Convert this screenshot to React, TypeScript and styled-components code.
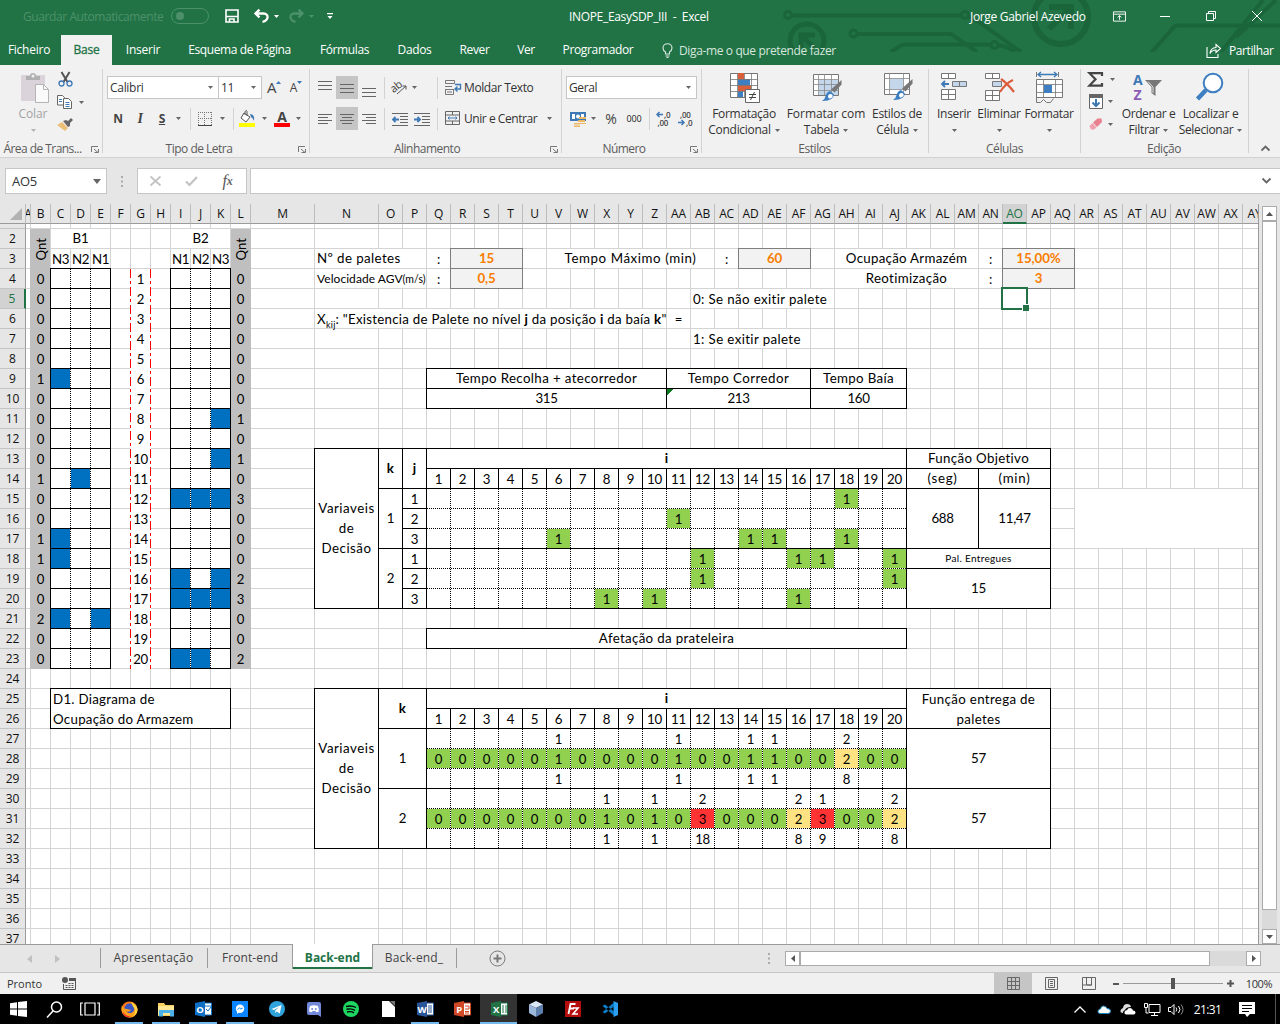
import React from "react";
import styled, { createGlobalStyle, css } from "styled-components";

const ui = `"Open Sans", "Noto Sans", sans-serif`;
const sheetFont = `Lato, "Open Sans", sans-serif`;

const Global = createGlobalStyle`
  * { box-sizing: border-box; }
  body { margin: 0; overflow: hidden; background: #e6e6e6; }
`;

const Window = styled.div`
  width: 1280px;
  height: 1024px;
  display: flex;
  flex-direction: column;
  overflow: hidden;
  font: 12px ${ui};
  letter-spacing: -0.3px;
  color: #333;
  white-space: nowrap;
  svg { display: block; flex: none; overflow: visible; }
`;

/* ---------- shared parts ---------- */

const Slot = styled.div<{ w?: number; h?: number; on?: boolean; left?: boolean }>`
  flex: none;
  width: ${(p) => (p.w ? p.w + "px" : "auto")};
  height: ${(p) => (p.h ? p.h + "px" : "100%")};
  display: flex;
  align-items: center;
  justify-content: ${(p) => (p.left ? "flex-start" : "center")};
  background: ${(p) => (p.on ? "#c5c5c5" : "transparent")};
`;

const Gap = styled.div<{ w: number }>`
  flex: none;
  width: ${(p) => p.w}px;
`;

const Label = styled.span<{ s?: number; ls?: number; c?: string; b?: boolean }>`
  font-size: ${(p) => p.s ?? 12}px;
  letter-spacing: ${(p) => (p.ls === undefined ? "inherit" : p.ls + "px")};
  color: ${(p) => p.c ?? "inherit"};
  font-weight: ${(p) => (p.b ? 700 : 400)};
`;

const Caret = ({ c = "#666", w = 5 }: { c?: string; w?: number }) => (
  <svg width={w} height={w === 5 ? 3 : 5} viewBox="0 0 5 3" preserveAspectRatio="none"><path d="M0 0h5L2.5 3z" fill={c} /></svg>
);

/* ---------- title bar ---------- */

const GreenHead = styled.header`
  position: relative;
  height: 65px;
  flex: none;
  background: #217346;
  color: #fff;
`;
const Circuit = styled.svg`
  position: absolute;
  top: 0;
  right: 0;
  && { overflow: hidden; }
`;
const TitleRow = styled.div`
  position: relative;
  height: 35px;
  display: flex;
  align-items: center;
  padding-bottom: 3px;
`;
const Toggle = styled.div`
  width: 38px;
  height: 16px;
  border: 1px solid #4c9169;
  border-radius: 8px;
  padding: 3px 4px;
  &::before {
    content: "";
    display: block;
    width: 8px;
    height: 8px;
    border-radius: 50%;
    background: #4c9169;
  }
`;
const TabRow = styled.nav`
  position: relative;
  height: 30px;
  display: flex;
`;
const RibbonTab = styled.div<{ w: number; active?: boolean; ls?: number }>`
  width: ${(p) => p.w}px;
  display: flex;
  align-items: center;
  justify-content: center;
  padding-bottom: 1px;
  letter-spacing: ${(p) => p.ls ?? -0.25}px;
  background: ${(p) => (p.active ? "#f1f1f1" : "transparent")};
  color: ${(p) => (p.active ? "#217346" : "#fff")};
  -webkit-text-stroke: ${(p) => (p.active ? "0.3px #217346" : "0")};
`;

const TitleBar = () => (
  <GreenHead>
    <Circuit width="500" height="52" viewBox="780 0 500 52" fill="none" stroke="#1b653b" strokeWidth="4">
      <circle cx="788" cy="15" r="3.500" strokeWidth="3" />
      <path d="M792 15.500H961M969 17l10 5 42 30" />
      <circle cx="965" cy="15" r="3.500" strokeWidth="3" />
      <circle cx="853.500" cy="33.500" r="3.500" strokeWidth="3" />
      <path d="M857 34h94l26 18M891 52l9-6q2-1.500 5-1.500h85M999 45.500q6 0 16 6.500" />
      <circle cx="994.500" cy="45" r="3.500" strokeWidth="3" />
      <circle cx="807" cy="41" r="17" strokeWidth="5" />
      <path d="M801 48V35h14M801 35l13 13" strokeWidth="5" />
      <circle cx="1061" cy="17" r="27" strokeWidth="6" />
      <path d="M1049 7h22v22M1071 7l-22 22" strokeWidth="6" />
      <path d="M1151 53l22-25q2-2.500 5-2.500h102M1221 52l42-52M1236 37l40-37" />
    </Circuit>
    <TitleRow>
      <Gap w={23} />
      <Slot w={141} left><Label c="#4c9169" ls={-0.41}>Guardar Automaticamente</Label></Slot>
      <Gap w={7} />
      <Toggle />
      <Slot w={46}>
        <svg width="14" height="14" viewBox="0 0 14 14" fill="none" stroke="#fff" strokeWidth="1.600"><path d="M1 1h12v12H1zM1 7.500h12M4.500 13v-3h4.500v3" /></svg>
      </Slot>
      <Slot w={13}>
        <svg width="15" height="14" viewBox="0 0 15 14" fill="none" stroke="#fff" strokeWidth="2.300"><path d="M5.500 .7L1.500 4.500l4 3.800M2 4.500h7.500q4.500 .5 4 4.200Q13 12 8.500 12.800" /></svg>
      </Slot>
      <Slot w={16}><Caret c="#fff" /></Slot>
      <Gap w={5} />
      <Slot w={15}>
        <svg width="15" height="14" viewBox="0 0 15 14" fill="none" stroke="#4c9169" strokeWidth="2.300"><path d="M9.500 .7l4 3.800-4 3.800M13 4.500H5.500Q1 5 1.500 8.700 2 12 6.500 12.800" /></svg>
      </Slot>
      <Slot w={15}><Caret c="#4c9169" /></Slot>
      <Slot w={22}>
        <svg width="6" height="7" viewBox="0 0 6 7"><path d="M0 0h6v1.300H0zM.5 3h5L3 6z" fill="#fff" /></svg>
      </Slot>
      <Gap w={228} />
      <Slot w={140} left><Label ls={-0.33}>INOPE_EasySDP_III&nbsp; -&nbsp; Excel</Label></Slot>
      <Gap w={261} />
      <Slot w={116} left><Label ls={-0.33}>Jorge Gabriel Azevedo</Label></Slot>
      <Slot w={66}>
        <svg width="13" height="11" viewBox="0 0 14 11" fill="none" stroke="#fff"><path d="M.5 .5h13v10H.5zM.5 3h13M7 9V4.500M5 6.500l2-2 2 2" /></svg>
      </Slot>
      <Slot w={26}><svg width="10" height="1"><path d="M0 .5h10" stroke="#fff" /></svg></Slot>
      <Slot w={66}>
        <svg width="10" height="10" viewBox="0 0 10 10" fill="none" stroke="#fff"><path d="M.5 2.500h7v7h-7zM2.500 2.500v-2h7v7h-2" /></svg>
      </Slot>
      <Slot w={26}>
        <svg width="10" height="10" viewBox="0 0 10 10" stroke="#fff"><path d="M0 0l10 10M10 0L0 10" /></svg>
      </Slot>
    </TitleRow>
    <TabRow>
      <RibbonTab w={58}>Ficheiro</RibbonTab>
      <Gap w={3} />
      <RibbonTab w={51} active>Base</RibbonTab>
      <RibbonTab w={62}>Inserir</RibbonTab>
      <RibbonTab w={131} ls={-0.4}>Esquema de Página</RibbonTab>
      <RibbonTab w={79} ls={-0.4}>Fórmulas</RibbonTab>
      <RibbonTab w={61} ls={-0.35}>Dados</RibbonTab>
      <RibbonTab w={59} ls={-0.35}>Rever</RibbonTab>
      <RibbonTab w={44} ls={-0.35}>Ver</RibbonTab>
      <RibbonTab w={100} ls={-0.35}>Programador</RibbonTab>
      <Gap w={13} />
      <Slot w={12}>
        <svg width="11" height="15" viewBox="0 0 11 15" fill="none" stroke="#d9eae0" strokeWidth="1.100"><path d="M3.500 11V9Q1 7.500 1 5a4.500 4.300 0 0 1 9 0q0 2.500-2.500 4v2zM3.500 13h4M4.500 14.500h2" /></svg>
      </Slot>
      <Gap w={6} />
      <Slot w={158} left><Label c="#d6e7dd" ls={-0.37}>Diga-me o que pretende fazer</Label></Slot>
      <Gap w={369} />
      <Slot w={16}>
        <svg width="16" height="15" viewBox="0 0 16 15" fill="none" stroke="#fff" strokeWidth="1.100"><path d="M1 4v10.500h11V11M4 10.500q.5-5.500 6-6V1.500l4.500 4-4.500 4V7Q6 7 4 10.500z" /></svg>
      </Slot>
      <Gap w={7} />
      <Slot left><Label ls={-0.4}>Partilhar</Label></Slot>
    </TabRow>
  </GreenHead>
);

/* ---------- ribbon ---------- */

const Ribbon = styled.div`
  height: 93px;
  flex: none;
  display: flex;
  background: #f1f1f1;
  border-bottom: 1px solid #d2d2d2;
`;
const Group = styled.section<{ w: number; pad?: number }>`
  position: relative;
  width: ${(p) => p.w}px;
  flex: none;
  display: flex;
  flex-direction: column;
  padding: 7px 0 0 ${(p) => p.pad ?? 0}px;
  &::after {
    content: "";
    position: absolute;
    right: 0;
    top: 4px;
    bottom: 4px;
    width: 1px;
    background: #d2d2d2;
  }
`;
const GroupBody = styled.div`
  height: 68px;
  display: flex;
`;
const GroupFoot = styled.div<{ pad?: number; trim?: number }>`
  height: 18px;
  display: flex;
  align-items: center;
  justify-content: center;
  color: #5c5c5c;
  letter-spacing: -0.45px;
  padding-top: 1px;
  margin-left: -${(p) => p.pad ?? 0}px;
  padding-right: ${(p) => p.trim ?? 14}px;
`;
const LauncherBox = styled.svg`
  position: absolute;
  right: 4px;
  bottom: 4px;
`;
const Launcher = () => (
  <LauncherBox width="8" height="7" viewBox="0 0 8 7" fill="none" stroke="#777"><path d="M.5 6V.5H7M3 3l4 3.500M7.500 3v3.500H3.500" /></LauncherBox>
);
const Stack = styled.div`
  display: flex;
  flex-direction: column;
  gap: 8px;
  padding-top: 4px;
`;
const Line = styled.div`
  height: 23px;
  display: flex;
  align-items: center;
`;
const Divider = styled.div<{ w: number }>`
  flex: none;
  width: ${(p) => p.w}px;
  height: 22px;
  background: linear-gradient(#d2d2d2, #d2d2d2) center / 1px 100% no-repeat;
`;
const Combo = styled.div<{ w: number }>`
  width: ${(p) => p.w}px;
  height: 23px;
  flex: none;
  display: flex;
  align-items: center;
  justify-content: space-between;
  padding: 0 5px 0 2px;
  background: #fff;
  border: 1px solid #c6c6c6;
  & + & { margin-left: -1px; }
`;
const Big = styled.div<{ w: number; dim?: boolean }>`
  flex: none;
  width: ${(p) => p.w}px;
  display: flex;
  flex-direction: column;
  align-items: center;
  line-height: 16px;
  color: ${(p) => (p.dim ? "#a3a3a3" : "#333")};
  & > svg { height: 32px; margin-bottom: 2px; }
`;
const BigLine = styled.div`
  height: 16px;
  display: flex;
  align-items: center;
  gap: 4px;
`;
const Glyph = styled.span<{ s?: number; c?: string; serif?: boolean; b?: boolean; i?: boolean; u?: boolean }>`
  font-size: ${(p) => p.s ?? 13}px;
  line-height: 1;
  font-family: ${(p) => (p.serif ? `"Liberation Serif", serif` : ui)};
  font-weight: ${(p) => (p.b ? 700 : 400)};
  font-style: ${(p) => (p.i ? "italic" : "normal")};
  text-decoration: ${(p) => (p.u ? "underline" : "none")};
  color: ${(p) => p.c ?? "#444"};
`;
const Swatched = styled.div<{ c: string }>`
  width: 16px;
  height: 17px;
  display: flex;
  justify-content: center;
  border-bottom: 4px solid ${(p) => p.c};
`;

const Lines = ({ mode, y = 0 }: { mode: "l" | "c" | "r" | "v"; y?: number }) => {
  const widths = mode === "v" ? [14, 14, 14] : [14, 10, 14, 10];
  return (
    <svg width="14" height="20" viewBox="0 0 14 20" stroke="#666">
      {widths.map((w, n) => {
        const x = mode === "l" ? 0 : mode === "r" ? 14 - w : (14 - w) / 2;
        const yy = (mode === "v" ? 6 + y : 5) + n * (mode === "v" ? 4 : 3);
        return <path key={n} d={`M${x} ${yy + 0.5}h${w}`} />;
      })}
    </svg>
  );
};
const IndentIcon = ({ right }: { right?: boolean }) => (
  <svg width="16" height="14" viewBox="0 0 16 14" fill="none" stroke="#666">
    <path d="M0 1.500h16M8 4.500h8M8 7.500h8M8 10.500h8M0 13.500h16" />
    <path d={right ? "M0 7.500h6M3.500 5L6 7.500 3.500 10" : "M1 7.500h6M3.500 5L1 7.500 3.500 10"} stroke="#3e78b5" strokeWidth="1.800" />
  </svg>
);
const Brush = () => (
  <>
    <path d="M30.500 7v4.500l-7 8-3.500-3z" fill="#777" />
    <path d="M19 18l4 3.500q-1 7-12 6.500 3-1.500 3.500-5 1-4 4.500-5z" fill="#3e7fc1" />
    <path d="M17 24q0-3 2.500-3t2 2.500q-1 2.500-3.500 2z" fill="#fff" />
  </>
);

const RibbonBar = () => (
  <Ribbon>
    <Group w={103}>
      <GroupBody>
        <Gap w={12} />
        <Big w={42} dim>
          <svg width="30" height="32" viewBox="-2 0 30 32">
            <path d="M1 3h24v26H1z" fill="#dad4da" />
            <path d="M6 4h4q0-3 3-3t3 3h4v4H6z" fill="#b0b0b0" /><circle cx="13" cy="4" r="1.500" fill="#f1f1f1" />
            <path d="M15.500 12.500h8l5 5v13h-13z" fill="#fafafa" stroke="#b5b5b5" /><path d="M23.500 12.500v5h5" fill="none" stroke="#b5b5b5" />
          </svg>
          <BigLine><Label ls={-0.1}>Colar</Label></BigLine>
          <BigLine><Caret c="#b5b5b5" /></BigLine>
        </Big>
        <Gap w={2} />
        <div>
          <Slot w={18} h={15}>
            <svg width="15" height="15" viewBox="0 0 15 15" fill="none"><path d="M3.500 0l6 10M11.500 0l-6 10" stroke="#555" strokeWidth="2" /><circle cx="3.500" cy="11.500" r="2.500" stroke="#3e78b5" strokeWidth="1.300" /><circle cx="11.500" cy="11.500" r="2.500" stroke="#3e78b5" strokeWidth="1.300" /></svg>
          </Slot>
          <Slot w={30} h={30} left>
            <svg width="16" height="14" viewBox="0 0 16 14" fill="#fff" stroke="#666"><path d="M1.500 .5h5l2 2v7.500h-7z" /><path d="M7.500 3.500h5l3 3v7h-8z" /><path d="M3 4.500h3M3 6.500h3M9.500 7.500h4M9.500 9.500h4M9.500 11.500h4" stroke="#3e78b5" /></svg>
            <Gap w={7} /><Caret />
          </Slot>
          <Slot w={18} h={14}>
            <svg width="16" height="13" viewBox="0 0 16 13"><path d="M0 7l5-3 6 6-3 3z" fill="#ecc077" /><path d="M6 3l3-1 2 1 3-3 2 2-3 3 0 3-2 1z" fill="#666" /></svg>
          </Slot>
        </div>
      </GroupBody>
      <GroupFoot trim={18}><Label ls={-0.55}>Área de Trans...</Label></GroupFoot>
      <Launcher />
    </Group>

    <Group w={207} pad={4}>
      <GroupBody>
        <Stack>
          <Line>
            <Combo w={112}><Label>Calibri</Label><Caret /></Combo>
            <Combo w={44}><Label>11</Label><Caret /></Combo>
            <Slot w={24}><Glyph s={15}>A</Glyph><svg width="5" height="14"><path d="M0 3h5L2.500 0z" fill="#3e78b5" /></svg></Slot>
            <Slot w={20}><Glyph s={12}>A</Glyph><svg width="5" height="14"><path d="M0 0h5L2.500 3z" fill="#3e78b5" /></svg></Slot>
          </Line>
          <Line>
            <Slot w={22}><Glyph b s={12}>N</Glyph></Slot>
            <Slot w={22}><Glyph b i serif s={14}>I</Glyph></Slot>
            <Slot w={22}><Glyph b u s={12}>S</Glyph></Slot>
            <Slot w={11}><Caret /></Slot>
            <Divider w={12} />
            <Slot w={18}><svg width="14" height="14" viewBox="0 0 14 14" fill="none" stroke="#777"><path d="M0 .5h14M0 6.500h14M.5 0v14M6.500 0v14M13.500 0v14" strokeDasharray="1 1" /><path d="M0 13.500h14" stroke="#444" /></svg></Slot>
            <Slot w={16}><Caret /></Slot>
            <Divider w={6} />
            <Gap w={3} />
            <Slot w={16}>
              <Swatched c="#ffff00"><svg width="16" height="13" viewBox="0 0 16 13" fill="#fff" stroke="#555"><path d="M5 3l6 4-4 5-5-4zM6 5V1.500q2-2 2 0V6" /><path d="M11 4q5 0 4 7-1-3-3-4z" fill="#3e78b5" stroke="none" /></svg></Swatched>
            </Slot>
            <Slot w={18}><Caret /></Slot>
            <Gap w={1} />
            <Slot w={16}><Swatched c="#ff0000"><Glyph b s={14}>A</Glyph></Swatched></Slot>
            <Slot w={16}><Caret /></Slot>
          </Line>
        </Stack>
      </GroupBody>
      <GroupFoot pad={4} trim={15}><Label ls={-0.5}>Tipo de Letra</Label></GroupFoot>
      <Launcher />
    </Group>

    <Group w={252} pad={4}>
      <GroupBody>
        <Stack>
          <Line>
            <Slot w={22}><Lines mode="v" y={-3} /></Slot>
            <Slot w={22} on><Lines mode="v" /></Slot>
            <Slot w={22}><Lines mode="v" y={4} /></Slot>
            <Divider w={8} />
            <Slot w={22}>
              <svg width="17" height="15" viewBox="0 0 17 15"><text x="0" y="10" fontSize="11" fill="#444" transform="rotate(-38 6 8)" fontFamily="Open Sans">ab</text><path d="M6 14l9-8M11.500 6H15v3.500" stroke="#555" fill="none" /></svg>
            </Slot>
            <Slot w={8}><Caret /></Slot>
            <Gap w={16} />
            <Divider w={6} />
            <Gap w={5} />
            <Slot w={19} left>
              <svg width="17" height="16" viewBox="0 0 17 16" fill="none" stroke="#777"><path d="M.5 .5h9v3h-9zM0 6.500h7M.5 9.500h8M.5 9v5.500h8V9M2 12h5" /><path d="M10 4.500h5.500v4.500H10M12.500 6.500L10 9l2.500 2.500" stroke="#3e78b5" strokeWidth="1.400" /></svg>
            </Slot>
            <Label ls={-0.4}>Moldar Texto</Label>
          </Line>
          <Line>
            <Slot w={22}><Lines mode="l" /></Slot>
            <Slot w={22} on><Lines mode="c" /></Slot>
            <Slot w={22}><Lines mode="r" /></Slot>
            <Divider w={8} />
            <Slot w={24}><IndentIcon /></Slot>
            <Slot w={20}><IndentIcon right /></Slot>
            <Gap w={2} />
            <Divider w={6} />
            <Gap w={5} />
            <Slot w={19} left>
              <svg width="16" height="15" viewBox="0 0 16 15" fill="none" stroke="#666"><path d="M.5 .5h14v13H.5zM.5 4h14M.5 10h14M7.500 .5V4M7.500 10v4" /><path d="M3 7h9M4.500 5.500L3 7l1.500 1.500M10.500 5.500L12 7l-1.500 1.500" stroke="#3e78b5" /></svg>
            </Slot>
            <Slot w={76} left><Label ls={-0.45}>Unir e Centrar</Label></Slot>
            <Slot w={18}><Caret /></Slot>
          </Line>
        </Stack>
      </GroupBody>
      <GroupFoot pad={4} trim={18}><Label ls={-0.5}>Alinhamento</Label></GroupFoot>
      <Launcher />
    </Group>

    <Group w={140} pad={4}>
      <GroupBody>
        <Stack>
          <Line><Combo w={131}><Label ls={-0.4}>Geral</Label><Caret /></Combo></Line>
          <Line>
            <Gap w={1} />
            <Slot w={22}>
              <svg width="17" height="16" viewBox="0 0 17 16"><path d="M0 1h16v9H0z" fill="#3e78b5" /><path d="M2 3h3v5H2zM11 3h3v4h-3z" fill="#fff" /><circle cx="8" cy="5.500" r="2" fill="#fff" /><path d="M9 6h7v2H9zM8 9h7v2H8zM9 12h7v1H9zM4 12h6v1.500H4zM4 14.500h6V16H4z" fill="#ecb863" /></svg>
            </Slot>
            <Slot w={9}><Caret /></Slot>
            <Slot w={26}><Glyph s={14}>%</Glyph></Slot>
            <Slot w={20}><Label s={9} ls={-0.2} c="#222">000</Label></Slot>
            <Divider w={10} />
            <Slot w={19}>
              <svg width="15" height="15" viewBox="0 0 15 15" fill="#444" fontSize="8" fontFamily="Open Sans" fontWeight="600"><path d="M7 3.500H1M3.500 1L1 3.500 3.500 6" stroke="#3e78b5" strokeWidth="1.500" fill="none" /><text x="8" y="6.500">,0</text><text x="1.500" y="14.500">,00</text></svg>
            </Slot>
            <Slot w={24}>
              <svg width="15" height="15" viewBox="0 0 15 15" fill="#444" fontSize="8" fontFamily="Open Sans" fontWeight="600"><path d="M0 11.500h6M3.500 9L6 11.500 3.500 14" stroke="#3e78b5" strokeWidth="1.500" fill="none" /><text x="2" y="6.500">,00</text><text x="8" y="14.500">,0</text></svg>
            </Slot>
          </Line>
        </Stack>
      </GroupBody>
      <GroupFoot pad={4} trim={16}><Label ls={-0.6}>Número</Label></GroupFoot>
      <Launcher />
    </Group>

    <Group w={227}>
      <GroupBody>
        <Big w={84}>
          <svg width="30" height="32" viewBox="-1 0 30 32"><path d="M.5 1.500h27v24H.5z" fill="#fff" stroke="#777" /><path d="M8 1v6h6V1zM8 13h13v6H8z" fill="#d95f3b" /><path d="M8 7h12v6H8zM8 19h5v6H8z" fill="#3e7fc1" /><path d="M0 7.500h28M0 13.500h28M0 19.500h28M7.500 1v25M14.500 1v6M14.500 19v6M21.500 1v24" stroke="#777" strokeWidth=".8" /><path d="M15.500 17.500h14v13h-14z" fill="#fff" stroke="#666" /><path d="M19 22.500h7M19 25.500h7M24.500 20l-4 8" stroke="#444" /></svg>
          <BigLine>Formatação</BigLine>
          <BigLine><Label>Condicional</Label><Caret /></BigLine>
        </Big>
        <Big w={80}>
          <svg width="32" height="32" viewBox="-1 -1 32 32"><path d="M2.500 1.500h25v21h-25z" fill="#fff" stroke="#777" /><path d="M8 7h19v15H8z" fill="#c3d6ea" /><path d="M2 6.500h26M2 11.500h26M2 17.500h26M7.500 1v21M13.500 1v21M20.500 1v21" stroke="#888" strokeWidth=".8" /><Brush /></svg>
          <BigLine><Label ls={-0.05}>Formatar com</Label></BigLine>
          <BigLine>Tabela<Caret /></BigLine>
        </Big>
        <Big w={62}>
          <svg width="32" height="32" viewBox="-1 0 32 32"><path d="M2.500 1.500h25v21h-25z" fill="#fff" stroke="#777" /><path d="M2 6.500h26M2 17.500h26M7.500 1v21M21.500 1v21" stroke="#888" strokeWidth=".8" /><path d="M8 7h13v10H8z" fill="#c3d6ea" /><Brush /></svg>
          <BigLine><Label>Estilos de</Label></BigLine>
          <BigLine>Célula<Caret /></BigLine>
        </Big>
      </GroupBody>
      <GroupFoot><Gap w={12} />Estilos</GroupFoot>
    </Group>

    <Group w={152}>
      <GroupBody>
        <Gap w={3} />
        <Big w={44}>
          <svg width="28" height="32" viewBox="0 0 28 32" fill="#fff" stroke="#777"><path d="M1.500 1.500h14v5h-14zM8.500 1.500v5M1.500 17.500h14v10h-14zM8.500 17.500v10M1.500 22.500h14" /><path d="M12.500 9.500h14v5h-14zM19.500 9.500v5" fill="#c3d6ea" /><path d="M9 12H2M5 9l-3 3 3 3" fill="none" stroke="#3e78b5" strokeWidth="1.800" /></svg>
          <BigLine><Label>Inserir</Label></BigLine><BigLine><Caret /></BigLine>
        </Big>
        <Big w={46}>
          <svg width="30" height="32" viewBox="-1 0 30 32" fill="#fff" stroke="#777"><path d="M.5 1.500h14v5h-14zM7.500 1.500v5M.5 18.500h14v10h-14zM7.500 18.500v10M.5 23.500h14" /><path d="M7.500 9.500h9v5h-9z" fill="#c3d6ea" /><path d="M16 7q6 4 13 13M28 8q-7 3-13 12" fill="none" stroke="#dc5b3c" strokeWidth="2.200" /></svg>
          <BigLine><Label>Eliminar</Label></BigLine><BigLine><Caret /></BigLine>
        </Big>
        <Big w={54}>
          <svg width="30" height="32" viewBox="-1 0 30 32" fill="#fff" stroke="#777"><path d="M1.500 7.500h26v18h-26z" /><path d="M1 12.500h27M1 20.500h27M8.500 7v19M20.500 7v19" strokeWidth=".8" /><path d="M9 13h8v8H9z" fill="#3e7fc1" stroke="none" /><path d="M1.500 25v5.500l4 0 3-3 3 3h4l3-4M1.500 0v5M23.500 0v5" fill="none" /><path d="M3 2.500h19M6 0L3 2.500 6 5M19 0l3 2.500L19 5" fill="none" stroke="#3e78b5" strokeWidth="1.300" /></svg>
          <BigLine><Label ls={-0.35}>Formatar</Label></BigLine><BigLine><Caret /></BigLine>
        </Big>
      </GroupBody>
      <GroupFoot><Gap w={13} />Células</GroupFoot>
    </Group>

    <Group w={168}>
      <GroupBody>
        <Gap w={6} />
        <div>
          <Slot w={32} h={14} left>
            <svg width="17" height="15" viewBox="0 0 17 15" fill="none" stroke="#444" strokeWidth="2.200"><path d="M15 4V1.200H2.500L8.500 7.300 2.500 13.600H15V11" /></svg>
            <Gap w={6} /><Caret />
          </Slot>
          <Slot w={32} h={31} left>
            <Gap w={2} /><svg width="14" height="15" viewBox="0 0 14 15" fill="#fff" stroke="#666"><path d="M.5 .5h13v14H.5z" /><path d="M0 0h14v4H0z" fill="#666" stroke="none" /><path d="M7 5v7M3.500 8.500L7 12l3.500-3.500" fill="none" stroke="#3e78b5" strokeWidth="2" /></svg>
            <Gap w={5} /><Caret />
          </Slot>
          <Slot w={32} h={14} left>
            <Gap w={2} /><svg width="14" height="12" viewBox="0 0 14 12"><path d="M8.500 .5h4l.5 3.500-5 5-4-4.500z" fill="#e8808f" /><path d="M3.500 5l4 4.500-2.500 2H2L.5 8z" fill="#f0a0ac" /></svg>
            <Gap w={5} /><Caret />
          </Slot>
        </div>
        <Gap w={1} />
        <Big w={57}>
          <svg width="32" height="32" viewBox="1 0 32 32" fontFamily="Open Sans" fontWeight="700" fontSize="14"><text x="1" y="13">
            <tspan fill="#3e78b5">A</tspan><tspan x="1.500" y="27.500" fill="#8a5bb5">Z</tspan></text><path d="M13 8h17l-6.500 7v9l-4 -3v-6z" fill="#777" /><path d="M16 9.500l5 5.500v6" stroke="#ddd" fill="none" /></svg>
          <BigLine><Label ls={-0.4}>Ordenar e</Label></BigLine>
          <BigLine>Filtrar<Caret /></BigLine>
        </Big>
        <Big w={67}>
          <svg width="30" height="32" viewBox="1 0 30 32" fill="#fff" stroke="#3e7fc1"><path d="M11 18l-8.500 9" strokeWidth="4.500" /><circle cx="18" cy="11" r="9.300" strokeWidth="2" /></svg>
          <BigLine><Label ls={-0.3}>Localizar e</Label></BigLine>
          <BigLine><Label ls={-0.35}>Selecionar</Label><Caret /></BigLine>
        </Big>
      </GroupBody>
      <GroupFoot><Gap w={12} />Edição</GroupFoot>
    </Group>
    <Gap w={12} />
    <Slot w={9}><svg width="9" height="78" viewBox="0 -68 9 78"><path d="M.5 5.500l4-4 4 4" transform="translate(0 5)" fill="none" stroke="#666" strokeWidth="1.800" /></svg></Slot>
  </Ribbon>
);

/* ---------- formula bar ---------- */

const FormulaRow = styled.div`
  height: 46px;
  flex: none;
  display: flex;
  padding: 10px 0 10px 5px;
  background: #e6e6e6;
`;
const WhiteBox = styled.div<{ w?: number; justify?: string }>`
  ${(p) => (p.w ? `width: ${p.w}px; flex: none;` : "flex: 1; border-right: 0 !important;")}
  display: flex;
  align-items: center;
  justify-content: ${(p) => p.justify ?? "space-between"};
  padding: 0 5px 0 6px;
  background: #fff;
  border: 1px solid #c6c6c6;
`;
const FormulaBar = () => (
  <FormulaRow>
    <WhiteBox w={102}><Label s={13} ls={-0.3}>AO5</Label><Caret w={8} /></WhiteBox>
    <Slot w={30}><svg width="2" height="11" fill="#aaa"><path d="M0 0h2v2H0zM0 4.500h2v2H0zM0 9h2v2H0z" /></svg></Slot>
    <WhiteBox w={110} justify="center">
      <Slot w={34}><svg width="11" height="10" viewBox="0 0 11 10" stroke="#c3c3c3" strokeWidth="1.800"><path d="M.5 .5l10 9M10.500 .5l-10 9" /></svg></Slot>
      <Slot w={38}><svg width="13" height="10" viewBox="0 0 13 10" fill="none" stroke="#c3c3c3" strokeWidth="2.200"><path d="M1 5.500L4.500 9 12 1" /></svg></Slot>
      <Slot w={34}><Glyph serif i s={16} c="#555">f</Glyph><Glyph serif i b s={12} c="#666">x</Glyph></Slot>
      <Gap w={2} />
    </WhiteBox>
    <Gap w={3} />
    <WhiteBox justify="flex-end"><svg width="9" height="6" viewBox="0 0 9 6"><path d="M.5 .5l4 4 4-4" fill="none" stroke="#666" strokeWidth="1.800" /></svg><Gap w={4} /></WhiteBox>
  </FormulaRow>
);

/* ---------- worksheet ---------- */

const letters = "ABCDEFGHIJKLMNOPQRSTUVWXYZ";
const cols: string[] = [...letters.split(""), ...letters.slice(0, 25).split("").map((l) => "A" + l)];
const colWidth = (i: number) => (i === 0 ? 5 : i < 12 ? 20 : i < 14 ? 64 : 24);
const lastRow = 37;

const SheetArea = styled.div`
  height: 740px;
  flex: none;
  display: flex;
  background: #e6e6e6;
`;
const Grid = styled.div`
  width: 1259px;
  height: 741px;
  flex: none;
  display: grid;
  grid-template-columns: 26px ${cols.map((_, i) => colWidth(i) + "px").join(" ")};
  grid-template-rows: 20px 5px repeat(${lastRow - 1}, 20px);
  overflow: hidden;
  background: #fff;
  border-right: 1px solid #9b9b9b;
  color: #000;
  font: 13.2px ${sheetFont};
`;
const colLine = (c: string) => cols.indexOf(c) + 2;
const area = (c1: string, r1: number, c2 = c1, r2 = r1) =>
  `${r1 + 1} / ${colLine(c1)} / ${r2 + 2} / ${colLine(c2) + 1}`;

const Placed = styled.div.attrs<{ $at: string }>((p) => ({ style: { gridArea: p.$at } }))<{ $at: string }>``;

const ColLine = styled(Placed)`border-right: 1px solid #d4d4d4;`;
const RowLine = styled(Placed)`border-bottom: 1px solid #d4d4d4;`;
const ColHead = styled(Placed)<{ $on?: boolean }>`
  display: flex;
  align-items: center;
  justify-content: center;
  overflow: hidden;
  font: 12px ${ui};
  letter-spacing: -0.2px;
  color: ${(p) => (p.$on ? "#217346" : "#111")};
  background: ${(p) => (p.$on ? "#d2d2d2" : "#e6e6e6")};
  border-right: 1px solid #bdbdbd;
  border-bottom: ${(p) => (p.$on ? "2px solid #217346" : "1px solid #9b9b9b")};
`;
const RowHead = styled(Placed)<{ $on?: boolean }>`
  display: flex;
  align-items: center;
  justify-content: center;
  overflow: hidden;
  font: 12px ${ui};
  letter-spacing: 0;
  color: ${(p) => (p.$on ? "#217346" : "#111")};
  background: ${(p) => (p.$on ? "#d2d2d2" : "#e6e6e6")};
  border-bottom: 1px solid #c4c4c4;
  border-right: ${(p) => (p.$on ? "2px solid #217346" : "1px solid #9b9b9b")};
`;
const Corner = styled(Placed)`
  display: flex;
  justify-content: flex-end;
  align-items: flex-end;
  padding: 0 3px 3px;
  background: #e6e6e6;
  border-right: 1px solid #bdbdbd;
  border-bottom: 1px solid #9b9b9b;
`;

const isNumber = (v: unknown) => typeof v === "number" || (typeof v === "string" && /^[\d,%]+$/.test(v));

const Cell = styled(Placed)<{
  $line?: string; $bg?: string; $b?: boolean; $left?: boolean; $low?: boolean; $s?: number; $ls?: number;
}>`
  margin: -1px 0 0 -1px;
  display: flex;
  align-items: center;
  justify-content: ${(p) => (p.$left ? "flex-start" : "center")};
  text-align: ${(p) => (p.$left ? "left" : "center")};
  padding-left: ${(p) => (p.$left ? 2 : 0)}px;
  padding-bottom: ${(p) => (p.$low ? 0 : 2)}px;
  line-height: 20px;
  background: ${(p) => p.$bg ?? "#fff"};
  border: 1px solid ${(p) => p.$line ?? "#d4d4d4"};
  font-weight: ${(p) => (p.$b ? 700 : 400)};
  font-size: ${(p) => p.$s ?? 13.3}px;
  letter-spacing: ${(p) => p.$ls ?? (isNumber(p.children) ? -0.3 : 0.33)}px;
  color: #000;
`;
const Input = styled(Cell)`
  background: #f2f2f2;
  border-color: #7f7f7f;
  color: #fa7d00;
  font-weight: 700;
  letter-spacing: -0.1px;
`;

const dotsDown = "repeating-linear-gradient(to bottom, #000 0 1px, #fff 1px 2px) right top / 1px 100% no-repeat";
const dotsAcross = "repeating-linear-gradient(to right, #000 0 1px, #fff 1px 2px) left bottom / 100% 1px no-repeat";
const Dotted = styled(Placed)<{ $bg: string; $solidRight?: boolean; $solidBottom?: boolean }>`
  display: flex;
  align-items: center;
  justify-content: center;
  line-height: 20px;
  letter-spacing: -0.3px;
  padding-right: 1px;
  ${(p) => {
    const right = p.$solidRight ? "linear-gradient(#000, #000) right top / 1px 100% no-repeat" : dotsDown;
    const bottom = p.$solidBottom ? "linear-gradient(#000, #000) left bottom / 100% 1px no-repeat" : dotsAcross;
    return css`background: ${bottom}, ${right}, ${p.$bg};`;
  }}
`;
const Aisle = styled(Placed)`
  margin-left: -1px;
  --dash: repeating-linear-gradient(to bottom, #f00 0 9px, #fff 9px 12px, #f00 12px 15px, #fff 15px 18px);
  background: var(--dash) left top / 1px 100% no-repeat, var(--dash) right top / 1px 100% no-repeat, #fff;
`;
const Plain = styled(Placed)`
  display: flex;
  align-items: center;
  justify-content: center;
  line-height: 20px;
  letter-spacing: -0.3px;
  padding-right: 1px;
`;
const GrayStrip = styled(Placed)`
  background: #bfbfbf;
  margin-left: -1px;
`;
const Turned = styled.span`
  writing-mode: vertical-rl;
  transform: rotate(180deg);
  letter-spacing: 0;
`;
const Blank = styled(Placed)`background: #fff; margin-bottom: 1px;`;
const Selection = styled(Placed)`
  position: relative;
  margin: -2px -1px -1px -2px;
  border: 2px solid #217346;
  &::after {
    content: "";
    position: absolute;
    right: -3px;
    bottom: -3px;
    width: 6px;
    height: 6px;
    background: #217346;
    border: solid #fff;
    border-width: 1px 0 0 1px;
  }
`;
const ErrorMark = styled(Placed)`
  width: 6px;
  height: 6px;
  background: linear-gradient(135deg, #0a7a1e 50%, transparent 50%);
`;
const Sub = styled.span`
  font-size: 9px;
  line-height: 1;
  position: relative;
  top: 4px;
`;

const K = "#000";
const BLUE = "#0070c0";
const GREEN = "#92d050";
const YELLOW = "#ffe383";
const RED = "#ff3333";

const leftBay: Record<number, string> = { 9: "C", 14: "D", 17: "C", 18: "C", 21: "CE" };
const rightBay: Record<number, string> = { 11: "K", 13: "K", 15: "IJK", 19: "IK", 20: "IJK", 23: "IJ" };
const slots = Array.from({ length: 20 }, (_, i) => i);
const slotCol = (i: number) => cols[16 + i];

const decision: Record<number, number[]> = {
  15: [18], 16: [11], 17: [6, 14, 15, 18], 18: [12, 16, 17, 20], 19: [12, 20], 20: [8, 10, 16],
};
const delivery: Record<number, Record<number, number>> = {
  27: { 6: 1, 11: 1, 14: 1, 15: 1, 18: 2 },
  28: { 6: 1, 11: 1, 14: 1, 15: 1, 18: 2 },
  29: { 6: 1, 11: 1, 14: 1, 15: 1, 18: 8 },
  30: { 8: 1, 10: 1, 12: 2, 16: 2, 17: 1, 20: 2 },
  31: { 8: 1, 10: 1, 12: 3, 16: 2, 17: 3, 20: 2 },
  32: { 8: 1, 10: 1, 12: 18, 16: 8, 17: 9, 20: 8 },
};

const Bay = ({ letters: ls, filled }: { letters: string; filled: Record<number, string> }) => (
  <>
    <Cell $at={area(ls[0], 4, ls[2], 23)} $line={K} />
    {slots.map((i) =>
      ls.split("").map((l, n) => (
        <Dotted key={l + i} $at={area(l, i + 4)} $solidBottom $solidRight={n === 2} $bg={filled[i + 4]?.includes(l) ? BLUE : "#fff"} />
      ))
    )}
  </>
);

const Numbers = ({ row }: { row: number }) => (
  <>{slots.map((i) => <Cell key={i} $at={area(slotCol(i), row)} $line={K} $low>{i + 1}</Cell>)}</>
);

const Worksheet = () => (
  <Grid>
    {cols.map((c) => <ColLine key={c} $at={area(c, 1, c, lastRow)} />)}
    {Array.from({ length: lastRow }, (_, r) => <RowLine key={r} $at={area("A", r + 1, "AY", r + 1)} />)}

    <Corner $at="1 / 1 / 2 / 2"><svg width="12" height="12"><path d="M12 0v12H0z" fill="#b2b2b2" /></svg></Corner>
    {cols.map((c, i) => <ColHead key={c} $at={`1 / ${i + 2} / 2 / ${i + 3}`} $on={c === "AO"}>{c}</ColHead>)}
    {Array.from({ length: lastRow }, (_, r) => (
      <RowHead key={r} $at={`${r + 2} / 1 / ${r + 3} / 2`} $on={r === 4}>{r ? r + 1 : ""}</RowHead>
    ))}

    <GrayStrip $at={area("B", 2, "B", 23)} />
    <GrayStrip $at={area("L", 2, "L", 23)} />
    <Plain $at={area("B", 2, "B", 3)}><Turned>Qnt</Turned></Plain>
    <Plain $at={area("L", 2, "L", 3)}><Turned>Qnt</Turned></Plain>
    <Cell $at={area("C", 2, "E", 2)} $ls={-0.2}>B1</Cell>
    <Cell $at={area("I", 2, "K", 2)} $ls={-0.2}>B2</Cell>
    {[["C", "N3"], ["D", "N2"], ["E", "N1"], ["I", "N1"], ["J", "N2"], ["K", "N3"]].map(([c, t]) => (
      <Cell key={c} $at={area(c, 3)} $ls={-0.4} $low>{t}</Cell>
    ))}
    <Aisle $at={area("G", 4, "G", 23)} />
    <Bay letters="CDE" filled={leftBay} />
    <Bay letters="IJK" filled={rightBay} />
    {slots.map((i) => (
      <React.Fragment key={i}>
        <Plain $at={area("B", i + 4)}>{(leftBay[i + 4] ?? "").length}</Plain>
        <Plain $at={area("G", i + 4)}>{i + 1}</Plain>
        <Plain $at={area("L", i + 4)}>{(rightBay[i + 4] ?? "").length}</Plain>
      </React.Fragment>
    ))}
    <Cell $at={area("C", 25, "K", 26)} $line={K} $left $low $ls={0.27}>D1. Diagrama de<br />Ocupação do Armazem</Cell>

    <Cell $at={area("N", 3, "P", 3)} $left $ls={0.4}>Nº de paletes</Cell>
    <Cell $at={area("N", 4, "P", 4)} $left $low $s={12} $ls={0.05}>Velocidade AGV<Label s={10.5}>(m/s)</Label></Cell>
    <Plain $at={area("Q", 3)}>:</Plain>
    <Plain $at={area("Q", 4)}>:</Plain>
    <Cell $at={area("V", 3, "AB", 3)} $ls={0.58}>Tempo Máximo (min)</Cell>
    <Plain $at={area("AC", 3)}>:</Plain>
    <Cell $at={area("AH", 3, "AM", 3)} $ls={0.27}>Ocupação Armazém</Cell>
    <Cell $at={area("AH", 4, "AM", 4)}>Reotimização</Cell>
    <Plain $at={area("AN", 3)}>:</Plain>
    <Plain $at={area("AN", 4)}>:</Plain>
    <Input $at={area("R", 3, "T", 3)}>15</Input>
    <Input $at={area("R", 4, "T", 4)}>0,5</Input>
    <Input $at={area("AD", 3, "AF", 3)}>60</Input>
    <Input $at={area("AO", 3, "AQ", 3)}>15,00%</Input>
    <Input $at={area("AO", 4, "AQ", 4)}>3</Input>
    <Cell $at={area("AB", 5, "AG", 5)} $left $low $ls={0.37}>0: Se não exitir palete</Cell>
    <Cell $at={area("AB", 7, "AF", 7)} $left $low $ls={0.38}>1: Se exitir palete</Cell>
    <Cell $at={area("N", 6, "Z", 6)} $left $low $ls={0.26}>
      <span>X<Sub>kij</Sub>: "Existencia de Palete no nível <b>j</b> da posição <b>i</b> da baía <b>k</b>"</span>
    </Cell>
    <Plain $at={area("AA", 6)}>=</Plain>

    <Cell $at={area("Q", 9, "Z", 9)} $line={K} $ls={0.37}>Tempo Recolha + atecorredor</Cell>
    <Cell $at={area("AA", 9, "AF", 9)} $line={K} $ls={0.45}>Tempo Corredor</Cell>
    <Cell $at={area("AG", 9, "AJ", 9)} $line={K}>Tempo Baía</Cell>
    <Cell $at={area("Q", 10, "Z", 10)} $line={K}>315</Cell>
    <Cell $at={area("AA", 10, "AF", 10)} $line={K}>213</Cell>
    <Cell $at={area("AG", 10, "AJ", 10)} $line={K}>160</Cell>
    <ErrorMark $at={area("AA", 10)} />

    {slots.map((i) =>
      [15, 16, 17, 18, 19, 20].map((r) => {
        const hit = decision[r].includes(i + 1);
        return (
          <Dotted key={`${i}-${r}`} $at={area(slotCol(i), r)} $bg={hit ? GREEN : "#fff"} $solidRight={i === 19} $solidBottom={r === 17 || r === 20}>
            {hit ? 1 : ""}
          </Dotted>
        );
      })
    )}
    <Cell $at={area("N", 13, "N", 20)} $line={K} $ls={0.5}>Variaveis<br />de<br />Decisão</Cell>
    <Cell $at={area("O", 13, "O", 14)} $line={K} $b>k</Cell>
    <Cell $at={area("P", 13, "P", 14)} $line={K} $b>j</Cell>
    <Cell $at={area("Q", 13, "AJ", 13)} $line={K} $b>i</Cell>
    <Numbers row={14} />
    <Cell $at={area("O", 15, "O", 17)} $line={K}>1</Cell>
    <Cell $at={area("O", 18, "O", 20)} $line={K}>2</Cell>
    {[15, 16, 17, 18, 19, 20].map((r) => <Cell key={r} $at={area("P", r)} $line={K} $low>{((r - 15) % 3) + 1}</Cell>)}
    <Cell $at={area("AK", 13, "AP", 13)} $line={K}>Função Objetivo</Cell>
    <Cell $at={area("AK", 14, "AM", 14)} $line={K} $ls={0.7}>(seg)</Cell>
    <Cell $at={area("AN", 14, "AP", 14)} $line={K} $ls={0.7}>(min)</Cell>
    <Cell $at={area("AK", 15, "AM", 17)} $line={K}>688</Cell>
    <Cell $at={area("AN", 15, "AP", 17)} $line={K}>11,47</Cell>
    <Cell $at={area("AK", 18, "AP", 18)} $line={K} $s={10}>Pal. Entregues</Cell>
    <Cell $at={area("AK", 19, "AP", 20)} $line={K}>15</Cell>
    <Blank $at={area("AR", 15, "AY", 17)} />

    <Cell $at={area("Q", 22, "AJ", 22)} $line={K}>Afetação da prateleira</Cell>

    {slots.map((i) =>
      [27, 28, 29, 30, 31, 32].map((r) => {
        const v = delivery[r][i + 1];
        const coloured = r === 28 || r === 31;
        const bg = !coloured ? "#fff" : v === 3 ? RED : v === 2 ? YELLOW : GREEN;
        return (
          <Dotted key={`${i}-${r}`} $at={area(slotCol(i), r)} $bg={bg} $solidRight={i === 19} $solidBottom={r === 29 || r === 32}>
            {v ?? (coloured ? 0 : "")}
          </Dotted>
        );
      })
    )}
    <Cell $at={area("N", 25, "N", 32)} $line={K} $ls={0.5}>Variaveis<br />de<br />Decisão</Cell>
    <Cell $at={area("O", 25, "P", 26)} $line={K} $b>k</Cell>
    <Cell $at={area("Q", 25, "AJ", 25)} $line={K} $b>i</Cell>
    <Numbers row={26} />
    <Cell $at={area("O", 27, "P", 29)} $line={K}>1</Cell>
    <Cell $at={area("O", 30, "P", 32)} $line={K}>2</Cell>
    <Cell $at={area("AK", 25, "AP", 26)} $line={K} $low>Função entrega de<br />paletes</Cell>
    <Cell $at={area("AK", 27, "AP", 29)} $line={K}>57</Cell>
    <Cell $at={area("AK", 30, "AP", 32)} $line={K}>57</Cell>
    <Selection $at={area("AO", 5)} />
  </Grid>
);

const VScroll = styled.div`
  width: 15px;
  margin: 2px 0 0 3px;
  display: flex;
  flex-direction: column;
  background: #dadada;
`;
const ScrollBox = styled.div<{ w?: number; h?: number }>`
  flex: none;
  width: ${(p) => (p.w ? p.w + "px" : "auto")};
  height: ${(p) => (p.h ? p.h + "px" : "auto")};
  background: #fff;
  border: 1px solid #ababab;
  display: flex;
  align-items: center;
  justify-content: center;
`;
const Fill = styled.div`flex: 1;`;

/* ---------- sheet tabs ---------- */

const SheetTabs = styled.div`
  height: 28px;
  flex: none;
  display: flex;
  background: #e6e6e6;
  border-top: 1px solid #9b9b9b;
  position: relative;
  color: #444;
`;
const SheetTab = styled.div<{ w: number; active?: boolean; ls?: number }>`
  width: ${(p) => p.w}px;
  height: 25px;
  display: flex;
  align-items: center;
  justify-content: center;
  letter-spacing: ${(p) => p.ls ?? 0.1}px;
  ${(p) =>
    p.active
      ? css`
          margin-top: -1px;
          padding-top: 2px;
          background: #fff;
          color: #217346;
          font-weight: 700;
          border: solid #9b9b9b;
          border-width: 0 1px;
          box-shadow: inset 0 -2px #217346;
        `
      : ""}
`;
const TabRule = styled.div`
  width: 1px;
  height: 20px;
  margin-top: 3px;
  background: #9b9b9b;
`;
const HScroll = styled.div`
  width: 476px;
  height: 15px;
  margin-top: 6px;
  display: flex;
  background: #dadada;
`;

const StatusBar = styled.div`
  height: 22px;
  flex: none;
  display: flex;
  background: #f0f0f0;
  border-top: 1px solid #c6c6c6;
`;

const Tabs = () => (
  <SheetTabs>
    <Gap w={22} />
    <Slot w={14}><svg width="5" height="8"><path d="M5 0v8L0 4z" fill="#c0c0c0" /></svg></Slot>
    <Gap w={14} />
    <Slot w={14}><svg width="5" height="8"><path d="M0 0v8l5-4z" fill="#c0c0c0" /></svg></Slot>
    <Gap w={36} />
    <TabRule />
    <SheetTab w={105} ls={0.25}>Apresentação</SheetTab>
    <Gap w={1} /><TabRule />
    <SheetTab w={84}>Front-end</SheetTab>
    <SheetTab w={81} active ls={0}>Back-end</SheetTab>
    <SheetTab w={82} ls={0.15}>Back-end_</SheetTab>
    <Gap w={1} /><TabRule />
    <Gap w={32} />
    <Slot w={17}><svg width="17" height="17" viewBox="0 0 17 17" fill="none" stroke="#777"><circle cx="8.500" cy="8.500" r="7.500" /><path d="M8.500 4.500v8M4.500 8.500h8" strokeWidth="2" /></svg></Slot>
    <Fill />
    <Slot w={14}><svg width="2" height="11" fill="#aaa"><path d="M0 0h2v2H0zM0 4.500h2v2H0zM0 9h2v2H0z" /></svg></Slot>
    <Gap w={9} />
    <HScroll>
      <ScrollBox w={15}><svg width="4" height="7"><path d="M4 0v7L0 3.500z" fill="#555" /></svg></ScrollBox>
      <ScrollBox w={410} />
      <Fill />
      <ScrollBox w={15}><svg width="4" height="7"><path d="M0 0v7l4-3.500z" fill="#555" /></svg></ScrollBox>
    </HScroll>
    <Gap w={19} />
  </SheetTabs>
);

const Status = () => (
  <StatusBar>
    <Gap w={7} />
    <Slot left w={54}><Label s={11} ls={0}>Pronto</Label></Slot>
    <Slot w={15}><svg width="14" height="13" viewBox="0 0 14 13"><circle cx="3" cy="3" r="3" fill="#555" /><path d="M7 1h7v3H7z" fill="#555" /><path d="M1.500 7v5.500h12V4M3.500 8.500h2M6.500 8.500h2M9.500 8.500h2M3.500 10.500h2M6.500 10.500h2M9.500 10.500h2M6.500 6.500h2M9.500 6.500h2" fill="none" stroke="#555" /></svg></Slot>
    <Fill />
    <Slot w={38} on><svg width="13" height="13" viewBox="0 0 13 13" fill="none" stroke="#666"><path d="M.5 .5h12v12H.5zM4.500 0v13M8.500 0v13M0 4.500h13M0 8.500h13" /></svg></Slot>
    <Slot w={38}><svg width="13" height="13" viewBox="0 0 13 13" fill="none" stroke="#666"><path d="M.5 .5h12v12H.5zM3.500 2.500h6v8h-6zM5 4.500h3M5 6.500h3M5 8.500h3" /></svg></Slot>
    <Slot w={38}><svg width="14" height="13" viewBox="0 0 14 13" fill="none" stroke="#666"><path d="M.5 .5h13v12H.5zM4.500 .5v7.500M9.500 .5v7.500h-9M5 8h5" /></svg></Slot>
    <Slot w={15}><svg width="6" height="2"><path d="M0 0h6v2H0z" fill="#555" /></svg></Slot>
    <svg width="100" height="21" viewBox="0 0 100 21"><path d="M0 10.500h100" stroke="#999" /><path d="M48 5h4v11h-4z" fill="#555" /></svg>
    <Slot w={15}><svg width="7" height="7"><path d="M2.500 0h2v7h-2zM0 2.500h7v2H0z" fill="#555" /></svg></Slot>
    <Slot w={42}><Label s={11} ls={-0.4}>100%</Label></Slot>
  </StatusBar>
);

/* ---------- taskbar ---------- */

const Taskbar = styled.footer`
  height: 30px;
  flex: none;
  display: flex;
  background: #000;
  color: #fff;
`;
const TaskItem = styled.div<{ open?: boolean; active?: boolean }>`
  width: 37px;
  display: flex;
  align-items: center;
  justify-content: center;
  padding-left: 1px;
  background: ${(p) =>
    p.active
      ? "linear-gradient(#76b9ed, #76b9ed) center bottom / 37px 2px no-repeat, #333"
      : p.open
      ? "linear-gradient(#76b9ed, #76b9ed) 5px 28px / 28px 2px no-repeat"
      : "none"};
`;
const Office = ({ c, t, extra }: { c: string; t: string; extra: React.ReactNode }) => (
  <svg width="17" height="16" viewBox="0 0 17 16">
    <path d="M9 2h7.500v12H9z" fill="#fff" stroke={c} />
    {extra}
    <path d="M0 2l10-2v16L0 14z" fill={c} />
    <text x="5" y="11.500" fontSize="9.500" fontWeight="700" fontFamily="Open Sans" fill="#fff" textAnchor="middle">{t}</text>
  </svg>
);
const Tasks = () => (
  <Taskbar>
    <Slot w={36}><svg width="17" height="16" viewBox="0 0 17 16" fill="#fff"><path d="M0 2.200l7-1v6.300H0zM8 1l9-1v7.500H8zM0 8.500h7v6.300l-7-1zM8 8.500h9V16l-9-1z" /></svg></Slot>
    <Slot w={36}><svg width="17" height="17" viewBox="0 0 17 17" fill="none" stroke="#fff" strokeWidth="1.500"><circle cx="10.500" cy="6" r="5" /><path d="M7 10L1 16.500" /></svg></Slot>
    <Slot w={38}><svg width="20" height="14" viewBox="1 0 20 14" fill="none" stroke="#fff" strokeWidth="1.200"><path d="M5 1h10v12H5zM3 1H.7v12H3M17 1h2.300v12H17" /></svg></Slot>
    <TaskItem open>
      <svg width="17" height="17" viewBox="0 0 17 17"><circle cx="8.500" cy="8.500" r="8" fill="#ff7b1a" /><circle cx="8.500" cy="7.500" r="5" fill="#3a55c4" /><path d="M1 4q1 4 5 4l4 1q-2 3-5 1 3 4 7 1 3-3 1-8 4 3 3 8-2 5.500-7.500 5.500T.5 10Q0 7 1 4z" fill="#ff9f1c" /><path d="M10 1q5 2 6.500 6.500Q17 13 12 15.500q4-6 0-10z" fill="#ffd23f" /><path d="M2 11q3 5 8 4-2 2-5 .5T2 11z" fill="#e8262b" /></svg>
    </TaskItem>
    <TaskItem open>
      <svg width="17" height="15" viewBox="0 0 17 15"><path d="M0 1h6l1.500 2H16v11H0z" fill="#f7cf5d" /><path d="M0 4h16v9H0z" fill="#ffe794" /><path d="M1 8h15v6.500h-4V11H5v3.500H1z" fill="#4cb1e8" /></svg>
    </TaskItem>
    <TaskItem open><Office c="#0f6fc6" t="O" extra={<path d="M10 5h6M11 8l2 2 3-4" stroke="#0f6fc6" fill="none" />} /></TaskItem>
    <TaskItem open>
      <svg width="16" height="16" viewBox="0 0 16 16"><path d="M0 0h16v16H0z" fill="#0a84ff" /><circle cx="8" cy="7.700" r="4.200" fill="#fff" /><path d="M5 13V10h3z" fill="#fff" /><path d="M5.500 8.800l2-2 1.300 1.200 2-1" stroke="#0a84ff" fill="none" /></svg>
    </TaskItem>
    <TaskItem>
      <svg width="16" height="16" viewBox="0 0 16 16"><circle cx="8" cy="8" r="8" fill="#30a3dc" /><path d="M2.500 8l10-4-1.700 8.500-3-2-1.500 1.500V9.500L10 6 5 9z" fill="#fff" /></svg>
    </TaskItem>
    <TaskItem>
      <svg width="14" height="15" viewBox="0 0 14 15"><path d="M2 0h10q2 0 2 2v13l-3-2H2q-2 0-2-2V2q0-2 2-2z" fill="#7289da" /><path d="M3 4q4-1.500 8 0 1 3 .8 5.500-1.500 1-2.800.5l-.5-1h-3l-.5 1q-1.500.5-2.800-.5Q2 6.500 3 4z" fill="#fff" /><circle cx="5.200" cy="7" r="1" fill="#7289da" /><circle cx="8.800" cy="7" r="1" fill="#7289da" /></svg>
    </TaskItem>
    <TaskItem>
      <svg width="16" height="16" viewBox="0 0 16 16"><circle cx="8" cy="8" r="8" fill="#1ed760" /><path d="M3 5.500q5.500-1.500 10 1M3.500 8.300q4.500-1.200 8.500 1M4 11q4-1 7 .8" stroke="#000" strokeWidth="1.400" fill="none" /></svg>
    </TaskItem>
    <TaskItem>
      <svg width="13" height="16" viewBox="0 0 13 16"><path d="M0 0h7l6 6v10H0z" fill="#fff" /><path d="M8 0h5v5z" fill="#777" /></svg>
    </TaskItem>
    <TaskItem open><Office c="#2a5699" t="W" extra={<path d="M11 5h4M11 7h4M11 9h4M11 11h4" stroke="#2a5699" />} /></TaskItem>
    <TaskItem><Office c="#d24726" t="P" extra={<path d="M11 5h4v3h-4M11 10.500h4M11 12h4" stroke="#d24726" fill="none" />} /></TaskItem>
    <TaskItem open active><Office c="#217346" t="X" extra={<path d="M11 5h2M14 5h2M11 7h2M14 7h2M11 9h2M14 9h2M11 11h2M14 11h2" stroke="#217346" />} /></TaskItem>
    <TaskItem>
      <svg width="14" height="16" viewBox="0 0 14 16"><path d="M7 0l7 3.500L7 7 0 3.500z" fill="#d8e6f5" /><path d="M0 3.500L7 7v9l-7-4z" fill="#9bb8dc" /><path d="M14 3.500L7 7v9l7-4z" fill="#5d7fae" /></svg>
    </TaskItem>
    <TaskItem>
      <svg width="16" height="16" viewBox="0 0 16 16"><path d="M0 0h16v16H0z" fill="#b50d0d" /><path d="M3.500 13L5.500 3h5M4.500 7.500H9" stroke="#fff" strokeWidth="1.800" fill="none" /><path d="M8 7h5l-5 6h5" stroke="#fff" strokeWidth="1.600" fill="none" /></svg>
    </TaskItem>
    <TaskItem>
      <svg width="16" height="16" viewBox="0 0 16 16"><path d="M11.500 0L16 2v12l-4.500 2z" fill="#2b9ff0" /><path d="M12 1.500v4L3 12.500 .5 11zM12 14.500v-4L3 3.500 .5 5z" fill="#0d7cc9" /></svg>
    </TaskItem>
    <Fill />
    <Slot w={24}><svg width="12" height="7" viewBox="0 0 12 7"><path d="M.5 6.500L6 1l5.500 5.500" fill="none" stroke="#fff" strokeWidth="1.300" /></svg></Slot>
    <Slot w={24}><svg width="14" height="9" viewBox="0 0 14 9"><path d="M3 8.500Q.5 8 1 6t2.500-2Q4 1 6.500 1T10 3.500q3.500 0 3.500 2.500T11 8.500z" fill="#fff" stroke="#1686bd" /></svg></Slot>
    <Slot w={24}><svg width="16" height="11" viewBox="0 0 16 11"><path d="M3 9Q0 8.500.5 6.500T3 4Q3.500 0 7 0t4 3Q6 3 5 6 2.500 7 3 9z" fill="#ddd" /><path d="M6 10.500q-2-.5-1.500-2.500T7 6.300Q7.500 4 10 4t3 2.500q2.500 0 2.500 2t-2 2z" fill="#fff" /></svg></Slot>
    <Slot w={24}><svg width="17" height="14" viewBox="0 0 17 14" fill="none" stroke="#fff"><path d="M.5 1.500h3v4h-3zM2 5.500V11h2.500M5 2.500h11v8H5zM10.500 10.500v3M7 13.500h7" /></svg></Slot>
    <Slot w={24}><svg width="17" height="13" viewBox="0 0 17 13" fill="none" stroke="#fff"><path d="M.5 4.500h2.500L6 1.500v10L3 8.500H.5zM8 4.500q1.500 2 0 4M10.500 3q3 3.500 0 7" /><path d="M13 1.500q4 5 0 10" stroke="#888" /></svg></Slot>
    <Slot w={39}><Label ls={-0.6}>21:31</Label></Slot>
    <Slot w={40}><svg width="16" height="15" viewBox="0 0 16 15"><path d="M0 0h16v12h-5l-3 3-2-3H0z" fill="#fff" /><path d="M3 3.500h10M3 6.500h10M3 9.500h7" stroke="#000" strokeWidth="1.200" /></svg></Slot>
    <Slot w={13} left><Gap w={8} /><svg width="1" height="30"><path d="M0 0h1v30H0z" fill="#555" /></svg></Slot>
  </Taskbar>
);

export default function App() {
  return (
    <Window>
      <Global />
      <TitleBar />
      <RibbonBar />
      <FormulaBar />
      <SheetArea>
        <Worksheet />
        <VScroll>
          <ScrollBox h={15}><svg width="7" height="4"><path d="M0 4h7L3.500 0z" fill="#555" /></svg></ScrollBox>
          <ScrollBox h={689} />
          <Fill />
          <ScrollBox h={15}><svg width="7" height="4"><path d="M0 0h7L3.500 4z" fill="#555" /></svg></ScrollBox>
        </VScroll>
      </SheetArea>
      <Tabs />
      <Status />
      <Tasks />
    </Window>
  );
}
